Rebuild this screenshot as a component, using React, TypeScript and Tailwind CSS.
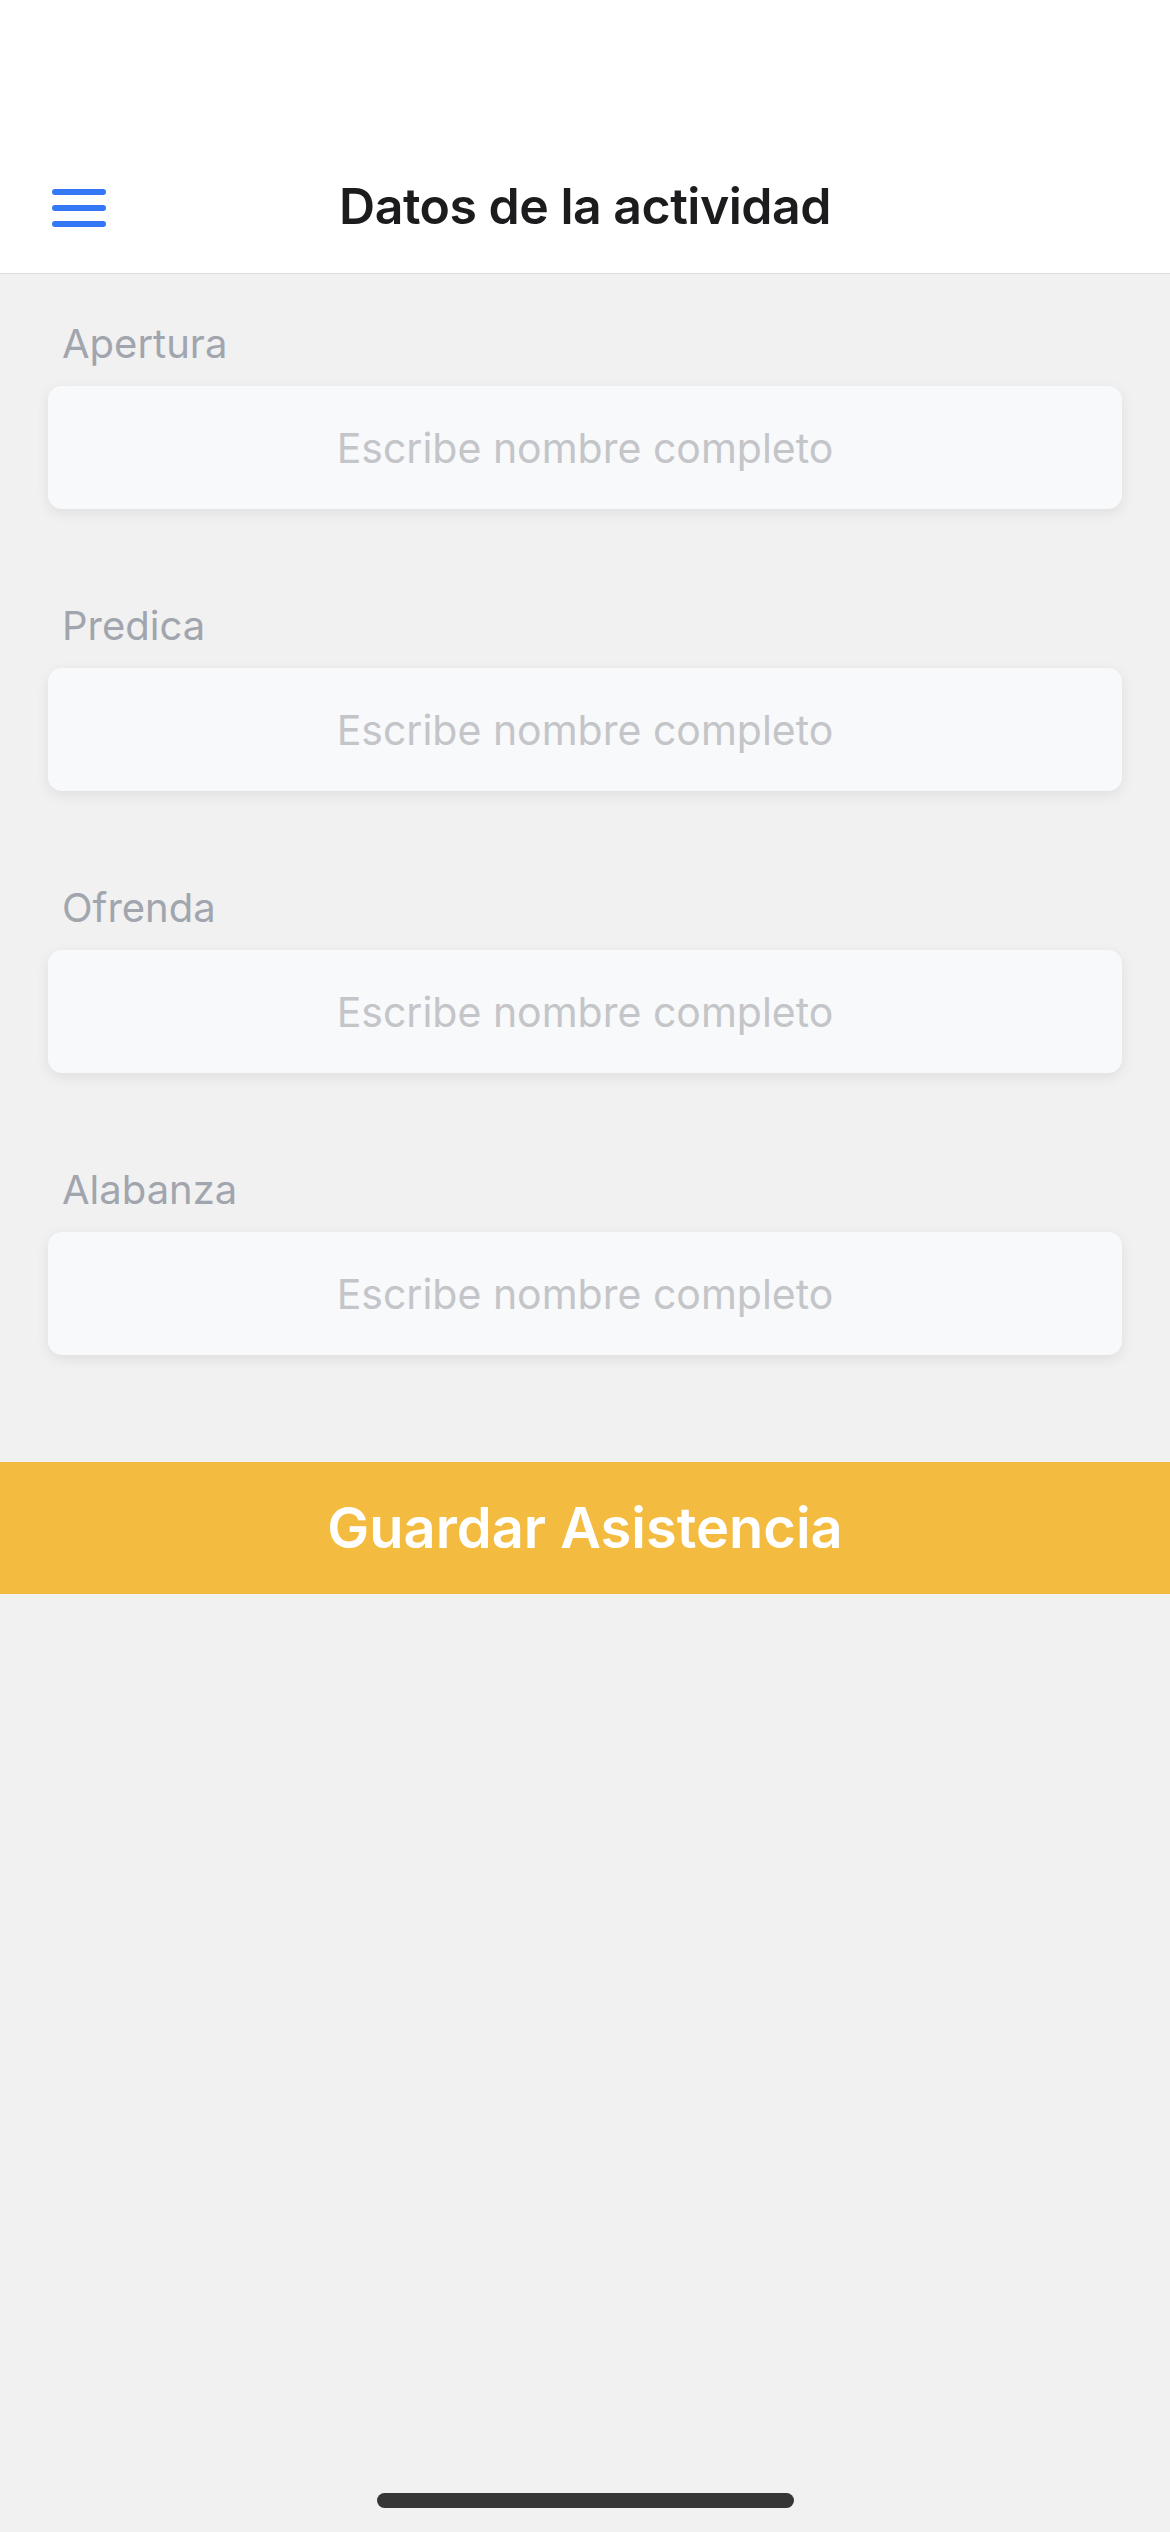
const fields = ["Apertura", "Predica", "Ofrenda", "Alabanza"]

function MenuIcon() {
  return (
    <svg width="54" height="38" viewBox="0 0 54 38" fill="none">
      <path d="M3 3h48M3 19h48M3 35h48" stroke="#3478f6" strokeWidth="6" strokeLinecap="round" />
    </svg>
  )
}

function Field({ label }: { label: string }) {
  return (
    <div className="flex flex-col">
      <label className="pl-[14px] text-[40px] leading-[50px] text-[#a1a5ae]">{label}</label>
      <input
        type="text"
        placeholder="Escribe nombre completo"
        className="mt-[17px] h-[123px] w-full rounded-[14px] bg-[#f8f9fb] text-center text-[41px] text-[#333] shadow-[0_4px_14px_rgba(0,0,0,0.08)] outline-none placeholder:text-[#c4c5c8]"
      />
    </div>
  )
}

export default function App() {
  return (
    <div className="flex min-h-[2532px] w-[1170px] flex-col bg-[#f1f1f1] font-['Inter',sans-serif]">
      <header className="bg-white pt-[140px] border-b border-[#dcdcdc]">
        <div className="relative flex h-[133px] items-center justify-center">
          <button className="absolute left-[52px] top-[49px]">
            <MenuIcon />
          </button>
          <h1 className="text-[50px] font-semibold tracking-[-0.5px] text-[#1c1c1e]">Datos de la actividad</h1>
        </div>
      </header>

      <main className="flex flex-col gap-[92px] px-[48px] pt-[45px]">
        {fields.map((f) => (
          <Field key={f} label={f} />
        ))}
      </main>

      <button className="mt-[107px] flex h-[132px] w-full items-center justify-center bg-[#f4bb41] text-[56px] font-semibold text-white">
        Guardar Asistencia
      </button>

      <div className="flex-1" />
      <div className="flex justify-center pb-[24px]">
        <div className="h-[15px] w-[417px] rounded-full bg-[#363636]" />
      </div>
    </div>
  )
}
